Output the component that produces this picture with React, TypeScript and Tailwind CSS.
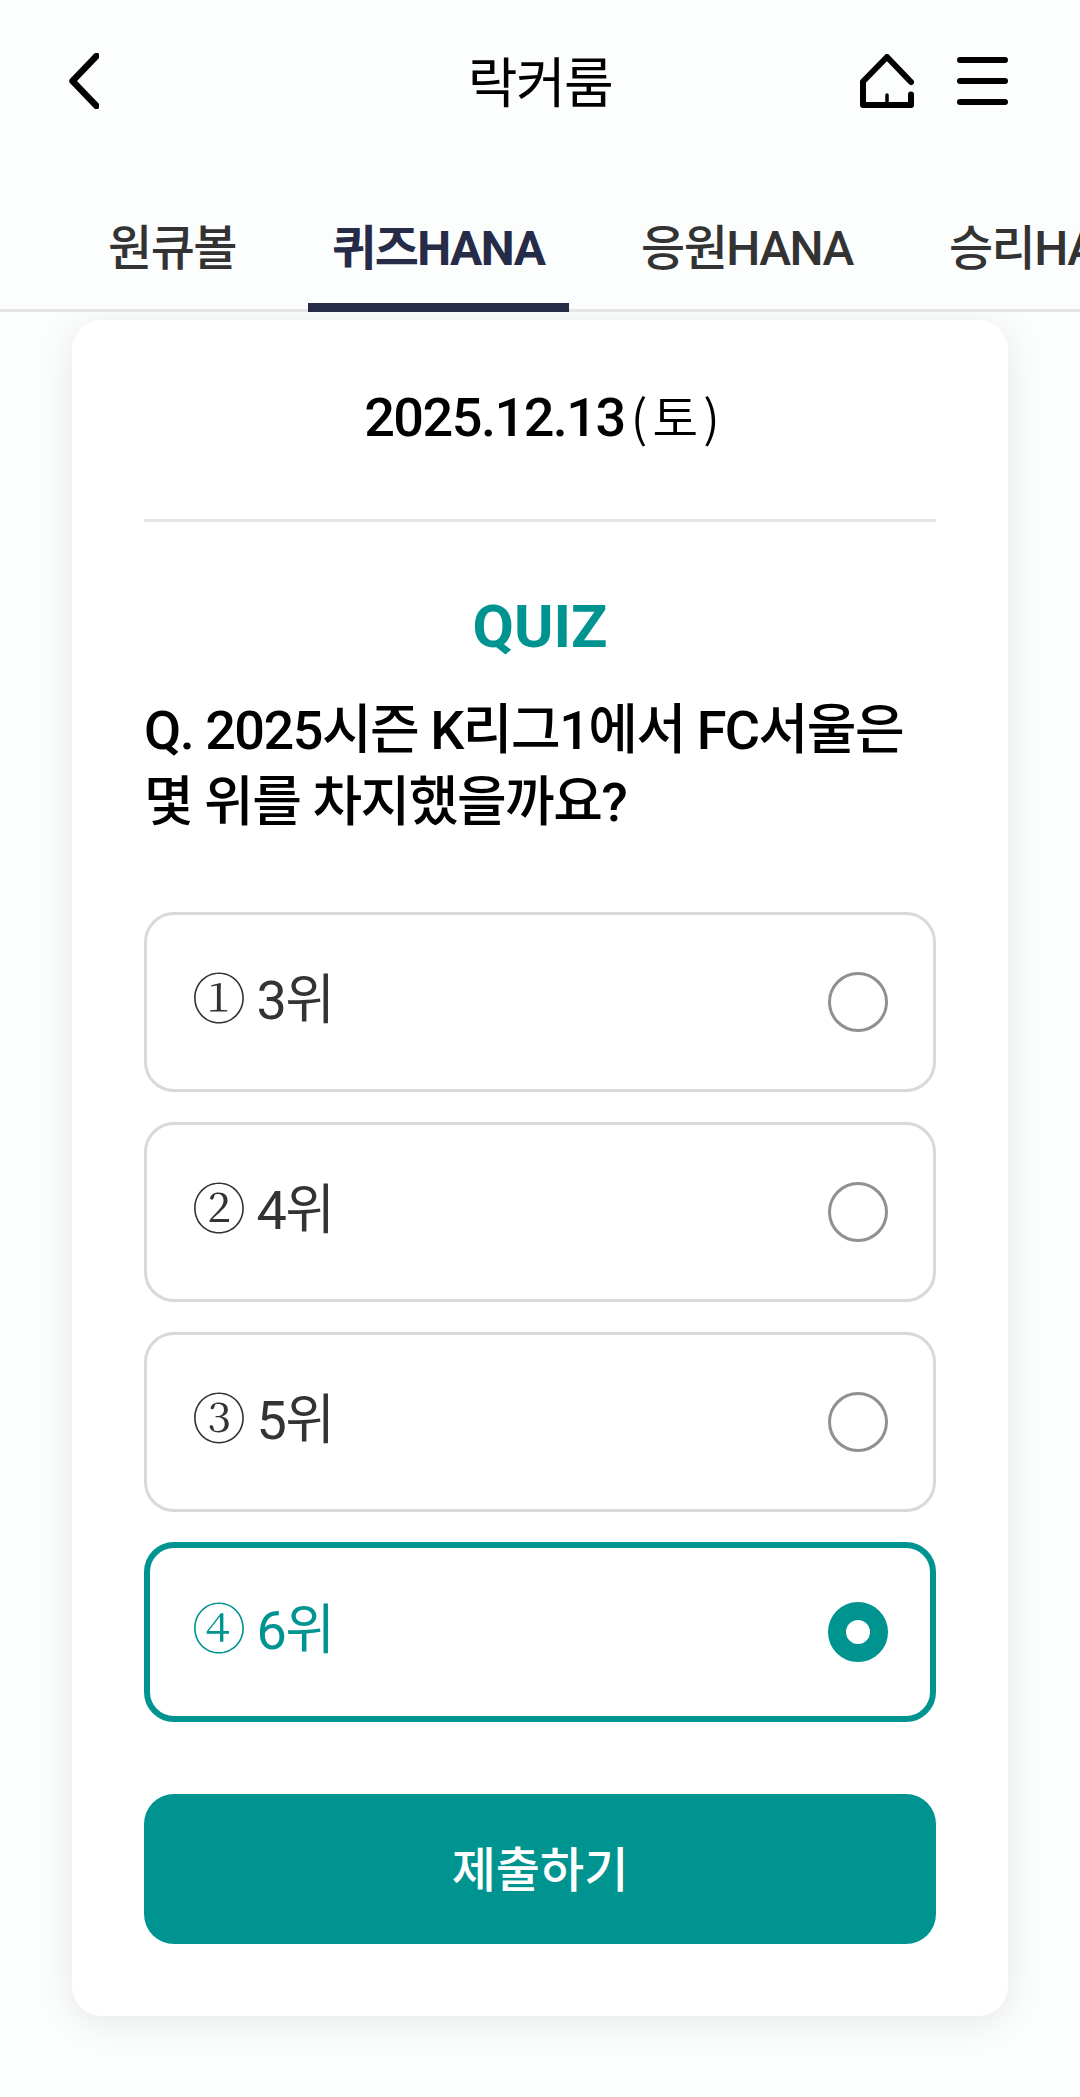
import { useState } from 'react';

const tabs = ['원큐볼', '퀴즈HANA', '응원HANA', '승리HANA'];

const options = [
  { mark: '①', label: '3위' },
  { mark: '②', label: '4위' },
  { mark: '③', label: '5위' },
  { mark: '④', label: '6위' },
];

function Header() {
  return (
    <header className="h-[162px] shrink-0 px-[69px] grid grid-cols-3 items-center">
      <button aria-label="뒤로">
        <svg width="30" height="56" viewBox="0 0 30 56" fill="none" stroke="#000" strokeWidth="6.5" strokeLinecap="round" strokeLinejoin="round">
          <path d="M27.5 3L3.5 28L27.5 53" />
        </svg>
      </button>
      <h1 className="pt-2 text-center text-[54px] leading-[72px] tracking-[-1.5px]">락커룸</h1>
      <div className="flex items-center justify-end gap-[43px] pr-[3px]">
        <button aria-label="홈">
          <svg width="54" height="54" viewBox="0 0 54 54" fill="none" stroke="#000" strokeWidth="6" strokeLinecap="round" strokeLinejoin="round">
            <path d="M51 28L27 3L3 27.5V51H51V40.5" />
            <path d="M27 41V50" strokeWidth="3.5" />
          </svg>
        </button>
        <button aria-label="메뉴">
          <svg width="51" height="48" viewBox="0 0 51 48" stroke="#000" strokeWidth="6" strokeLinecap="round">
            <path d="M3 3H48M3 24H48M3 45H48" />
          </svg>
        </button>
      </div>
    </header>
  );
}

function Tabs() {
  const [active, setActive] = useState(1);
  return (
    <nav className="h-[150px] shrink-0 overflow-hidden shadow-[inset_0_-3px_#e5e5e5]">
      <ul className="flex h-full gap-12 pl-[84px]">
        {tabs.map((tab, i) => (
          <li
            key={tab}
            onClick={() => setActive(i)}
            className={
              'shrink-0 px-6 pt-[51px] text-[48px] leading-[72px] tracking-[-1.5px] whitespace-nowrap ' +
              (i === active ? 'w-[261px] font-bold text-[#262b47] border-b-[9px] border-[#262b47]' : 'font-medium text-[#333]')
            }
          >
            {tab}
          </li>
        ))}
      </ul>
    </nav>
  );
}

export default function App() {
  const [picked, setPicked] = useState(3);
  return (
    <div className="w-[1080px] h-[2097px] overflow-hidden flex flex-col bg-[#fcfdfd] font-[Roboto,'Noto_Sans_CJK_KR',sans-serif] text-black">
      <Header />
      <Tabs />
      <div className="flex-1 overflow-hidden px-[72px] pt-2">
        <main className="h-[1696px] px-[72px] bg-white rounded-[30px] shadow-[0_6px_36px_rgba(0,0,0,0.09)]">
          {/* Date */}
          <div className="h-[202px] pt-[62px] flex justify-center items-start border-b-[3px] border-[#e5e5e5] text-[54px] leading-[72px] font-medium tracking-[-1.5px]">
            2025.12.13
            <span className="pl-1.5 -mt-[3px] -mr-[9px] font-['Noto_Sans_CJK_KR'] font-[350] text-[50px] tracking-[5px]">(토)</span>
          </div>

          {/* Question */}
          <h2 className="pt-[63px] text-center text-[60px] leading-[84px] font-bold text-[#009490]">QUIZ</h2>
          <p className="pt-[26px] h-[243px] text-[54px] leading-[72px] font-medium tracking-[-1.5px]">
            Q. 2025시즌 K리그1에서 FC서울은
            <br />
            몇 위를 차지했을까요?
          </p>

          {/* Answers */}
          <ul className="flex flex-col gap-[30px]">
            {options.map((option, i) => (
              <li
                key={option.mark}
                onClick={() => setPicked(i)}
                className={
                  'h-[180px] flex items-center justify-between rounded-[30px] ' +
                  (i === picked ? 'border-[6px] border-[#009490] px-[42px] text-[#009490]' : 'border-[3px] border-[#d9d9d9] px-[45px] text-[#333]')
                }
              >
                <span className="pb-[7px] text-[54px] leading-[72px] tracking-[-1.5px]">
                  <span className="font-['Noto_Serif_CJK_KR','Noto_Sans_CJK_KR',serif]">{option.mark}</span> {option.label}
                </span>
                <span
                  className={
                    'size-[60px] rounded-full bg-white ' +
                    (i === picked ? 'border-[18px] border-[#009490]' : 'border-[3px] border-[#909090]')
                  }
                />
              </li>
            ))}
          </ul>

          <button className="mt-[72px] w-full h-[150px] pt-[3px] rounded-[30px] bg-[#009490] text-white text-[48px] leading-[72px] font-medium">
            제출하기
          </button>
        </main>
      </div>
    </div>
  );
}
